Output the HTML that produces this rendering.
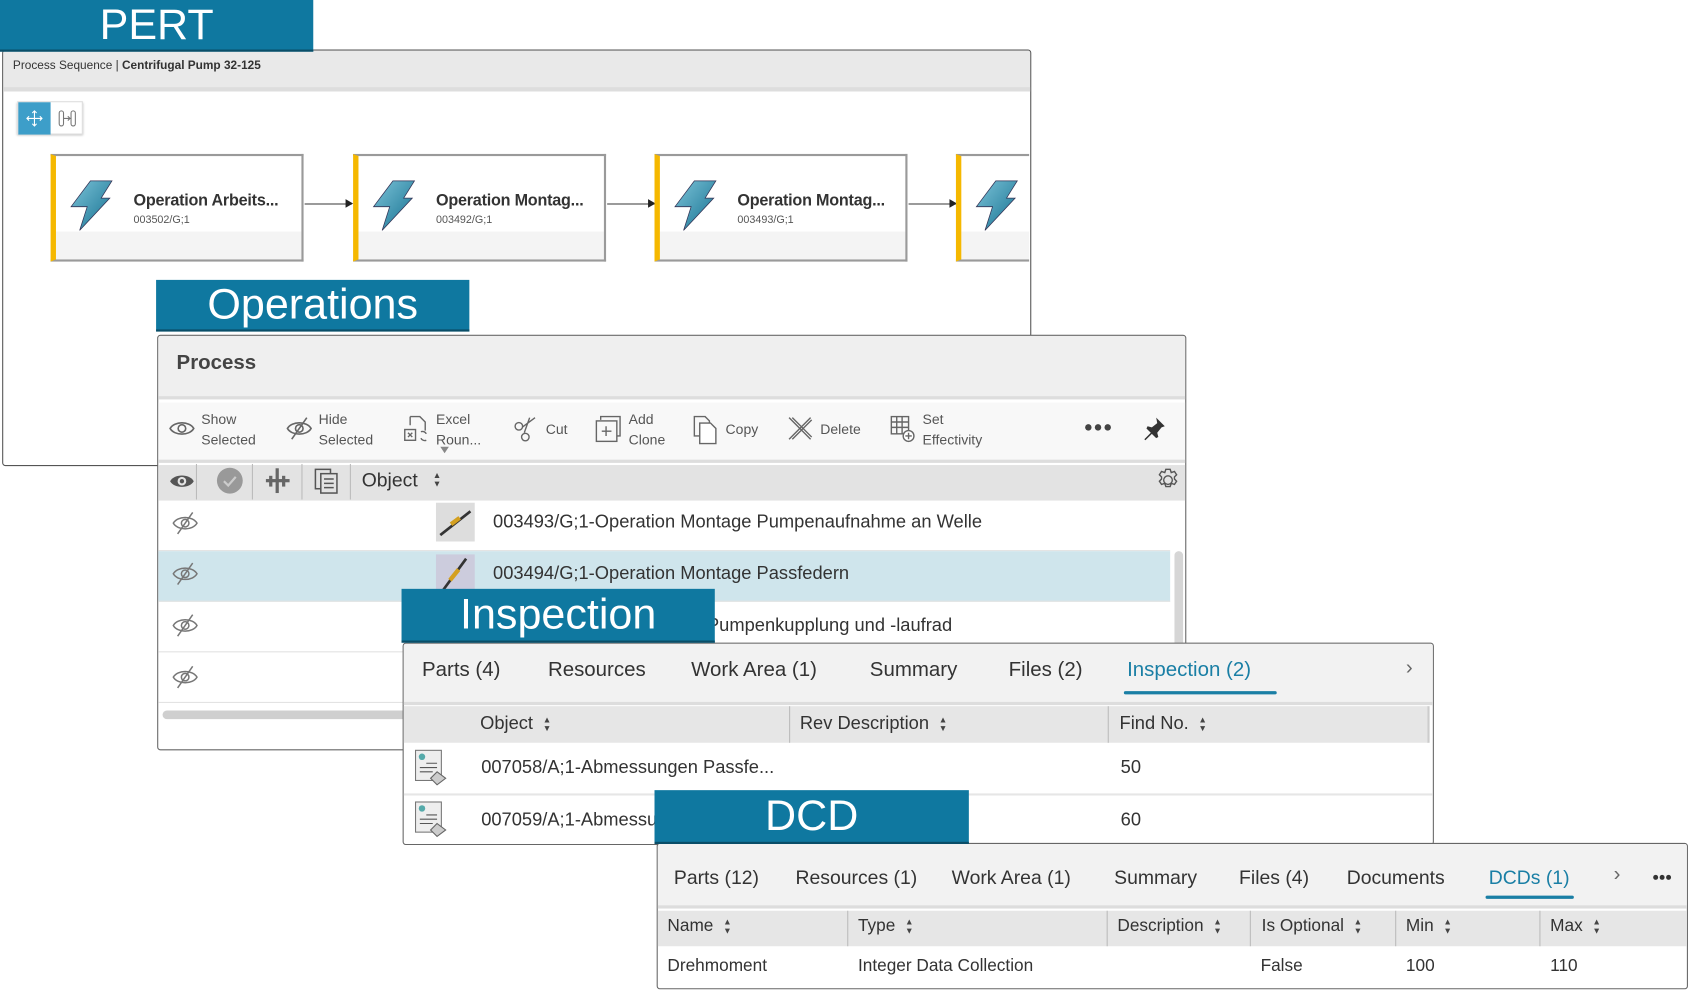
<!DOCTYPE html>
<html><head><meta charset="utf-8"><style>
*{box-sizing:border-box;margin:0;padding:0}
body{width:1688px;height:990px;overflow:hidden;background:#fff;font-family:"Liberation Sans",sans-serif;color:#333}
#s{position:absolute;left:0;top:0;width:1568px;height:920px;transform:scale(1.0765);transform-origin:0 0}
.a{position:absolute}
.lbl{position:absolute;background:#0f78a0;color:#fff;text-align:center;font-size:40px;border-bottom:2px solid #0a4e68}
.panel{position:absolute;background:#fff;border:1px solid #555;border-radius:3px;overflow:hidden}
.node{position:absolute;top:143px;width:235px;height:100px;border:2px solid #9a9a9a;border-left:5px solid #f5b800;background:linear-gradient(#fff 0,#fff 70px,#f4f4f4 70px)}
.node .t{position:absolute;left:72px;top:33px;font-size:15px;color:#333;white-space:nowrap;font-weight:bold;letter-spacing:-0.2px}
.node .n{position:absolute;left:72px;top:54px;font-size:10px;color:#555}
.node svg{position:absolute;left:12px;top:22px}
.arr{position:absolute;top:189px;height:1px;background:#444}
.arr:after{content:"";position:absolute;right:-1px;top:-4px;border-left:7px solid #222;border-top:4.5px solid transparent;border-bottom:4.5px solid transparent}
.tb{position:absolute;top:380px;font-size:13px;color:#555;line-height:19px}
.row{position:absolute;left:0;width:940px;height:47px;border-bottom:1px solid #e2e2e2}
.tabs span{position:absolute;font-size:19px;color:#333}
.hd span{position:absolute;font-size:17px;color:#333}
.cell{position:absolute;font-size:17px;color:#333}
.sort{display:inline-block;font-size:8px;line-height:8px;margin-left:9px;color:#444;vertical-align:middle;font-style:normal}
</style></head><body><div id="s">

<!-- PERT -->
<div class="panel" style="left:2px;top:46px;width:956px;height:387px">
  <div class="a" style="left:0;top:0;width:100%;height:38px;background:#e9e9e9;border-bottom:4px solid #ddd"></div>
  <div class="a" style="left:9px;top:8px;font-size:11px;color:#333">Process Sequence | <b>Centrifugal Pump 32-125</b></div>
  <div class="a" style="left:13px;top:47px;width:61px;height:31px;border:1px solid #ddd;box-shadow:0 1px 2px #bbb;background:#fff">
    <div class="a" style="left:0;top:0;width:30px;height:30px;background:#3d9ec9"></div>
    <svg class="a" style="left:6px;top:6px" width="18" height="18" viewBox="0 0 18 18" fill="none" stroke="#fff" stroke-width="1"><path d="M9 2v14M2 9h14M7 4l2-2 2 2M7 14l2 2 2-2M4 7l-2 2 2 2M14 7l2 2-2 2"/></svg>
    <svg class="a" style="left:37px;top:7px" width="18" height="16" viewBox="0 0 18 16" fill="none" stroke="#777" stroke-width="1"><rect x="1" y="1" width="4" height="14" rx="2"/><rect x="12" y="1" width="4" height="14" rx="2"/><path d="M5 8h7M9 6l2 2-2 2"/></svg>
  </div>
</div>
<div class="lbl" style="left:0;top:0;width:291px;height:48px;line-height:46px">PERT</div>

<svg width="0" height="0" style="position:absolute"><defs><linearGradient id="g" x1="0" y1="0" x2="1" y2="1"><stop offset="0" stop-color="#7cc3d8"/><stop offset="1" stop-color="#136f8f"/></linearGradient></defs></svg>
<div class="node" style="left:47px"><svg width="44" height="48" viewBox="0 0 44 48"><path d="M20 1h20L30 17h8L10 47 17 25H2z" fill="url(#g)" stroke="#335" stroke-width=".7"/></svg><div class="t">Operation Arbeits...</div><div class="n">003502/G;1</div></div>
<div class="arr" style="left:283px;width:44px"></div>
<div class="node" style="left:328px"><svg width="44" height="48" viewBox="0 0 44 48"><path d="M20 1h20L30 17h8L10 47 17 25H2z" fill="url(#g)" stroke="#335" stroke-width=".7"/></svg><div class="t">Operation Montag...</div><div class="n">003492/G;1</div></div>
<div class="arr" style="left:564px;width:44px"></div>
<div class="node" style="left:608px"><svg width="44" height="48" viewBox="0 0 44 48"><path d="M20 1h20L30 17h8L10 47 17 25H2z" fill="url(#g)" stroke="#335" stroke-width=".7"/></svg><div class="t">Operation Montag...</div><div class="n">003493/G;1</div></div>
<div class="arr" style="left:844px;width:44px"></div>
<div class="node" style="left:888px;width:68px;border-right:none"><svg width="44" height="48" viewBox="0 0 44 48"><path d="M20 1h20L30 17h8L10 47 17 25H2z" fill="url(#g)" stroke="#335" stroke-width=".7"/></svg></div>

<!-- Operations -->
<div class="panel" style="left:146px;top:311px;width:956px;height:386px;border-color:#666">
  <div class="a" style="left:0;top:0;width:100%;height:59px;background:#efefef;border-bottom:3px solid #ddd"></div>
  <div class="a" style="left:17px;top:15px;font-size:19px;font-weight:bold;color:#444">Process</div>
  <div class="a" style="left:0;top:62px;width:100%;height:56px;background:#f8f8f8;border-bottom:3px solid #ddd"></div>
  <div class="a" style="left:0;top:120px;width:100%;height:33px;background:#e3e3e3"></div>
  <div class="a" style="left:0;top:153px;width:940px;height:190px">
    <div class="row" style="top:0"></div>
    <div class="row" style="top:47px;background:#cfe5ec"></div>
    <div class="row" style="top:94px"></div>
    <div class="row" style="top:141px"></div>
  </div>
  <div class="a" style="left:944px;top:200px;width:8px;height:140px;background:#d6d6d6;border-radius:4px"></div>
  <div class="a" style="left:4px;top:348px;width:240px;height:8px;background:#cfcfcf;border-radius:4px"></div>
</div>
<!-- toolbar -->
<svg class="a" style="left:157px;top:388px" width="24" height="20" viewBox="0 0 24 20" fill="none" stroke="#666" stroke-width="1.5"><path d="M1 10C5 3 19 3 23 10C19 17 5 17 1 10z"/><circle cx="12" cy="10" r="3.5"/></svg>
<div class="tb" style="left:187px">Show<br>Selected</div>
<svg class="a" style="left:265px;top:386px" width="26" height="24" viewBox="0 0 26 24" fill="none" stroke="#666" stroke-width="1.5"><path d="M2 12C6 5 20 5 24 12C20 19 6 19 2 12z"/><circle cx="13" cy="12" r="3.5"/><path d="M20 2L6 22"/></svg>
<div class="tb" style="left:296px">Hide<br>Selected</div>
<svg class="a" style="left:375px;top:385px" width="26" height="28" viewBox="0 0 26 28" fill="none" stroke="#666" stroke-width="1.3"><path d="M6 2h9l5 5v8M6 2v8"/><rect x="1" y="14" width="10" height="10"/><path d="M4 17l4 4M8 17l-4 4M16 16a4 4 0 0 1 5 2M21 24a4 4 0 0 1-5-2"/></svg>
<div class="tb" style="left:405px">Excel<br>Roun...</div>
<div class="a" style="left:409px;top:415px;border-top:6px solid #888;border-left:4px solid transparent;border-right:4px solid transparent"></div>
<svg class="a" style="left:476px;top:386px" width="24" height="26" viewBox="0 0 24 26" fill="none" stroke="#666" stroke-width="1.3"><circle cx="6" cy="10" r="3.5"/><circle cx="12" cy="20" r="3.5"/><path d="M9 11l12-9M11 16l5-14"/></svg>
<div class="tb" style="left:507px;top:389px">Cut</div>
<svg class="a" style="left:553px;top:385px" width="26" height="28" viewBox="0 0 26 28" fill="none" stroke="#666" stroke-width="1.3"><path d="M5 5V2h18v18h-3"/><rect x="1" y="6" width="19" height="19"/><path d="M10 11v9M6 15.5h9"/></svg>
<div class="tb" style="left:584px">Add<br>Clone</div>
<svg class="a" style="left:643px;top:385px" width="26" height="28" viewBox="0 0 26 28" fill="none" stroke="#666" stroke-width="1.3"><path d="M2 2h10l4 4v14H2z"/><path d="M7 8h10l5 5v14H7z" fill="#fff"/></svg>
<div class="tb" style="left:674px;top:389px">Copy</div>
<svg class="a" style="left:731px;top:386px" width="26" height="24" viewBox="0 0 26 24" fill="none" stroke="#666" stroke-width="1.3"><path d="M2 2l20 20M2 22L22 2M5 2l18 18M5 22L23 4"/></svg>
<div class="tb" style="left:762px;top:389px">Delete</div>
<svg class="a" style="left:826px;top:385px" width="26" height="28" viewBox="0 0 26 28" fill="none" stroke="#666" stroke-width="1.3"><rect x="2" y="2" width="16" height="16"/><path d="M2 7h16M2 12h16M7 2v16M12 2v16"/><circle cx="18" cy="20" r="5" fill="#fff"/><path d="M18 17v6M15 20h6"/></svg>
<div class="tb" style="left:857px">Set<br>Effectivity</div>
<svg class="a" style="left:1007px;top:393px" width="26" height="8" viewBox="0 0 26 8" fill="#444"><circle cx="4" cy="4" r="3"/><circle cx="13" cy="4" r="3"/><circle cx="22" cy="4" r="3"/></svg>
<svg class="a" style="left:1062px;top:386px" width="22" height="24" viewBox="0 0 22 24"><path d="M12 2l8 8-3 1-4 5 1 4-2 1-4-4-6 6-1-1 6-6-4-4 1-2 4 1 5-4z" fill="#333"/></svg>
<!-- column header -->
<div class="a" style="left:182px;top:431px;width:1px;height:33px;background:#bbb"></div>
<div class="a" style="left:234px;top:431px;width:1px;height:33px;background:#bbb"></div>
<div class="a" style="left:280px;top:431px;width:1px;height:33px;background:#bbb"></div>
<div class="a" style="left:325px;top:431px;width:1px;height:33px;background:#bbb"></div>
<svg class="a" style="left:157px;top:437px" width="24" height="20" viewBox="0 0 24 20"><path d="M1 10C5 3 19 3 23 10C19 17 5 17 1 10z" fill="#555"/><circle cx="12" cy="10" r="4" fill="#e3e3e3"/><circle cx="12" cy="10" r="2" fill="#555"/></svg>
<svg class="a" style="left:201px;top:434px" width="25" height="25" viewBox="0 0 25 25"><circle cx="12.5" cy="12.5" r="12" fill="#999"/><path d="M7 13l4 4 7-8" stroke="#ccc" stroke-width="2" fill="none"/></svg>
<svg class="a" style="left:246px;top:434px" width="24" height="25" viewBox="0 0 24 25" fill="#666"><rect x="10" y="1" width="3" height="23"/><rect x="4" y="8" width="3" height="10"/><rect x="16" y="8" width="3" height="10"/><rect x="1" y="11" width="22" height="3"/></svg>
<svg class="a" style="left:291px;top:434px" width="24" height="26" viewBox="0 0 24 26" fill="none" stroke="#555" stroke-width="1.4"><rect x="2" y="2" width="14" height="18"/><rect x="7" y="6" width="15" height="18" fill="#e3e3e3"/><path d="M10 11h9M10 15h9M10 19h9"/></svg>
<div class="a" style="left:336px;top:436px;font-size:18px;color:#333">Object</div>
<div class="a" style="left:402px;top:438px;font-size:8px;line-height:8px;color:#444">▲<br>▼</div>
<svg class="a" style="left:1073px;top:434px" width="24" height="24" viewBox="0 0 24 24" fill="none" stroke="#555" stroke-width="1.3"><circle cx="12" cy="12" r="4"/><path d="M10 2h4l1 3 3-1 2 3-2 2 0 2 2 2-2 3-3-1-1 3h-4l-1-3-3 1-2-3 2-2v-2l-2-2 2-3 3 1z"/></svg>
<!-- rows -->
<svg class="a" style="left:159px;top:474px" width="26" height="24" viewBox="0 0 26 24" fill="none" stroke="#777" stroke-width="1.4"><path d="M2 12C6 5 20 5 24 12C20 19 6 19 2 12z"/><circle cx="13" cy="12" r="3.5"/><path d="M20 2L6 22"/></svg>
<svg class="a" style="left:159px;top:521px" width="26" height="24" viewBox="0 0 26 24" fill="none" stroke="#777" stroke-width="1.4"><path d="M2 12C6 5 20 5 24 12C20 19 6 19 2 12z"/><circle cx="13" cy="12" r="3.5"/><path d="M20 2L6 22"/></svg>
<svg class="a" style="left:159px;top:569px" width="26" height="24" viewBox="0 0 26 24" fill="none" stroke="#777" stroke-width="1.4"><path d="M2 12C6 5 20 5 24 12C20 19 6 19 2 12z"/><circle cx="13" cy="12" r="3.5"/><path d="M20 2L6 22"/></svg>
<svg class="a" style="left:159px;top:617px" width="26" height="24" viewBox="0 0 26 24" fill="none" stroke="#777" stroke-width="1.4"><path d="M2 12C6 5 20 5 24 12C20 19 6 19 2 12z"/><circle cx="13" cy="12" r="3.5"/><path d="M20 2L6 22"/></svg>
<div class="a" style="left:405px;top:467px;width:36px;height:36px;background:#ddd"><svg width="36" height="36" viewBox="0 0 36 36"><path d="M4 30L32 8" stroke="#333" stroke-width="2.5"/><path d="M14 20l8-6" stroke="#d4a020" stroke-width="4"/></svg></div>
<div class="a" style="left:405px;top:515px;width:36px;height:36px;background:#ccd"><svg width="36" height="36" viewBox="0 0 36 36"><path d="M6 34L28 4" stroke="#333" stroke-width="2.5"/><path d="M13 24l8-10" stroke="#d4a020" stroke-width="4"/></svg></div>
<div class="cell" style="left:458px;top:475px">003493/G;1-Operation Montage Pumpenaufnahme an Welle</div>
<div class="cell" style="left:458px;top:523px">003494/G;1-Operation Montage Passfedern</div>
<div class="cell" style="left:600px;top:571px">ontage Pumpenkupplung und -laufrad</div>
<div class="lbl" style="left:145px;top:260px;width:291px;height:48px;line-height:46px">Operations</div>

<!-- Inspection -->
<div class="panel" style="left:374px;top:597px;width:958px;height:188px;border-color:#666">
  <div class="a" style="left:0;top:0;width:100%;height:57px;background:#f2f2f2;border-bottom:3px solid #ddd"></div>
  <div class="a" style="left:0;top:58px;width:952px;height:34px;background:#e6e6e6"></div>
  <div class="a" style="left:358px;top:58px;width:1px;height:34px;background:#bbb"></div>
  <div class="a" style="left:654px;top:58px;width:1px;height:34px;background:#bbb"></div>
  <div class="a" style="left:951px;top:58px;width:2px;height:34px;background:#ccc"></div>
  <div class="a" style="left:0;top:139px;width:100%;height:2px;background:#e6e6e6"></div>
</div>
<div class="tabs">
<span style="left:392px;top:612px">Parts (4)</span>
<span style="left:509px;top:612px">Resources</span>
<span style="left:642px;top:612px">Work Area (1)</span>
<span style="left:808px;top:612px">Summary</span>
<span style="left:937px;top:612px">Files (2)</span>
<span style="left:1047px;top:612px;color:#1a7fa5">Inspection (2)</span>
<span style="left:1306px;top:610px;color:#666">›</span>
</div>
<div class="a" style="left:1044px;top:642px;width:142px;height:3px;background:#1a7fa5;border-radius:2px"></div>
<div class="hd">
<span style="left:446px;top:662px">Object<i class="sort">▲<br>▼</i></span>
<span style="left:743px;top:662px">Rev Description<i class="sort">▲<br>▼</i></span>
<span style="left:1040px;top:662px">Find No.<i class="sort">▲<br>▼</i></span>
</div>
<svg class="a" style="left:384px;top:695px" width="36" height="36" viewBox="0 0 36 36"><rect x="2" y="2" width="24" height="28" fill="#eee" stroke="#777"/><circle cx="8" cy="8" r="3" fill="#5aa"/><path d="M12 14h10M6 18h16M6 22h12" stroke="#555"/><path d="M22 22l8 6-8 6-6-6z" fill="#ccc" stroke="#666"/></svg>
<svg class="a" style="left:384px;top:743px" width="36" height="36" viewBox="0 0 36 36"><rect x="2" y="2" width="24" height="28" fill="#eee" stroke="#777"/><circle cx="8" cy="8" r="3" fill="#5aa"/><path d="M12 14h10M6 18h16M6 22h12" stroke="#555"/><path d="M22 22l8 6-8 6-6-6z" fill="#ccc" stroke="#666"/></svg>
<div class="cell" style="left:447px;top:703px">007058/A;1-Abmessungen Passfe...</div>
<div class="cell" style="left:447px;top:752px">007059/A;1-Abmessu</div>
<div class="cell" style="left:1041px;top:703px">50</div>
<div class="cell" style="left:1041px;top:752px">60</div>
<div class="lbl" style="left:373px;top:547px;width:291px;height:50px;line-height:48px">Inspection</div>

<!-- DCD -->
<div class="panel" style="left:610px;top:783px;width:958px;height:136px;border-color:#666">
  <div class="a" style="left:0;top:0;width:100%;height:60px;background:#f2f2f2;border-bottom:3px solid #ddd"></div>
  <div class="a" style="left:0;top:62px;width:100%;height:33px;background:#e6e6e6"></div>
  <div class="a" style="left:176px;top:62px;width:1px;height:33px;background:#bbb"></div>
  <div class="a" style="left:417px;top:62px;width:1px;height:33px;background:#bbb"></div>
  <div class="a" style="left:550px;top:62px;width:1px;height:33px;background:#bbb"></div>
  <div class="a" style="left:685px;top:62px;width:1px;height:33px;background:#bbb"></div>
  <div class="a" style="left:819px;top:62px;width:1px;height:33px;background:#bbb"></div>
</div>
<div class="tabs">
<span style="left:626px;top:805px;font-size:18px">Parts (12)</span>
<span style="left:739px;top:805px;font-size:18px">Resources (1)</span>
<span style="left:884px;top:805px;font-size:18px">Work Area (1)</span>
<span style="left:1035px;top:805px;font-size:18px">Summary</span>
<span style="left:1151px;top:805px;font-size:18px">Files (4)</span>
<span style="left:1251px;top:805px;font-size:18px">Documents</span>
<span style="left:1383px;top:805px;font-size:18px;color:#1a7fa5">DCDs (1)</span>
<span style="left:1499px;top:802px;color:#666">›</span>
</div>
<svg class="a" style="left:1535px;top:812px" width="18" height="6" viewBox="0 0 18 6" fill="#333"><circle cx="3" cy="3" r="2.3"/><circle cx="9" cy="3" r="2.3"/><circle cx="15" cy="3" r="2.3"/></svg>
<div class="a" style="left:1380px;top:832px;width:82px;height:3px;background:#1a7fa5;border-radius:2px"></div>
<div class="hd">
<span style="left:620px;top:852px;font-size:16px">Name<i class="sort">▲<br>▼</i></span>
<span style="left:797px;top:852px;font-size:16px">Type<i class="sort">▲<br>▼</i></span>
<span style="left:1038px;top:852px;font-size:16px">Description<i class="sort">▲<br>▼</i></span>
<span style="left:1172px;top:852px;font-size:16px">Is Optional<i class="sort">▲<br>▼</i></span>
<span style="left:1306px;top:852px;font-size:16px">Min<i class="sort">▲<br>▼</i></span>
<span style="left:1440px;top:852px;font-size:16px">Max<i class="sort">▲<br>▼</i></span>
</div>
<div class="cell" style="left:620px;top:889px;font-size:16px">Drehmoment</div>
<div class="cell" style="left:797px;top:889px;font-size:16px">Integer Data Collection</div>
<div class="cell" style="left:1171px;top:889px;font-size:16px">False</div>
<div class="cell" style="left:1306px;top:889px;font-size:16px">100</div>
<div class="cell" style="left:1440px;top:889px;font-size:16px">110</div>
<div class="lbl" style="left:608px;top:734px;width:292px;height:50px;line-height:48px">DCD</div>

</div></body></html>
